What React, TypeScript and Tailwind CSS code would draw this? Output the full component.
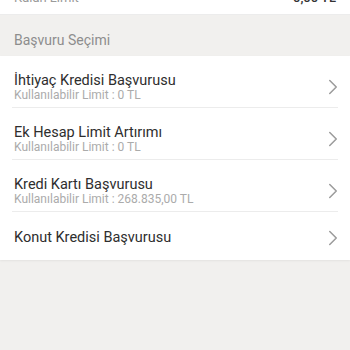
import { ChevronRight } from 'lucide-react';

const items = [
  { id: 'ihtiyac', title: 'İhtiyaç Kredisi Başvurusu', limit: 'Kullanılabilir Limit : 0 TL' },
  { id: 'ek-hesap', title: 'Ek Hesap Limit Artırımı', limit: 'Kullanılabilir Limit : 0 TL' },
  { id: 'kredi-karti', title: 'Kredi Kartı Başvurusu', limit: 'Kullanılabilir Limit : 268.835,00 TL' },
  { id: 'konut', title: 'Konut Kredisi Başvurusu', limit: '' },
];

export default function App() {
  return (
    <div className="w-[350px] h-[350px] bg-[#f1f0ee] overflow-hidden font-['Roboto',sans-serif]">
      {/* Kalan limit row (scrolled off) */}
      <div className="h-[15px] bg-white overflow-hidden border-b border-[#ececec]">
        <div className="flex justify-between px-[14px] -mt-[10px] text-[13px] leading-[16px]">
          <span className="text-[#9a9a9a]">Kalan Limit</span>
          <span className="text-[#333] font-medium">0,00 TL</span>
        </div>
      </div>

      {/* Section header */}
      <div className="px-[14px] pt-[15px] pb-[6px] text-[14px] leading-[20px] text-[#8d8d8d]">
        Başvuru Seçimi
      </div>

      {/* Items */}
      <div className="bg-white shadow-[0_1px_2px_rgba(0,0,0,0.06)]">
        {items.map((item, i) => (
          <div key={item.id}>
            <div
              className={`flex items-center pl-[14px] pr-[4px] ${
                item.limit ? 'pt-[16px] pb-[5px]' : 'pt-[17px] pb-[14px]'
              }`}
            >
              <div className="flex-1 min-w-0">
                <div className="text-[14.5px] leading-[17px] text-[#2e2e2e]">{item.title}</div>
                {item.limit && (
                  <div className="text-[12px] leading-[13px] text-[#ababab]">{item.limit}</div>
                )}
              </div>
              <ChevronRight className="w-[26px] h-[26px] -my-[6px] text-[#9c9c9c]" strokeWidth={1.4} />
            </div>
            {i < items.length - 1 && <div className="mx-[12px] h-px bg-[#ececec]" />}
          </div>
        ))}
      </div>
    </div>
  );
}
